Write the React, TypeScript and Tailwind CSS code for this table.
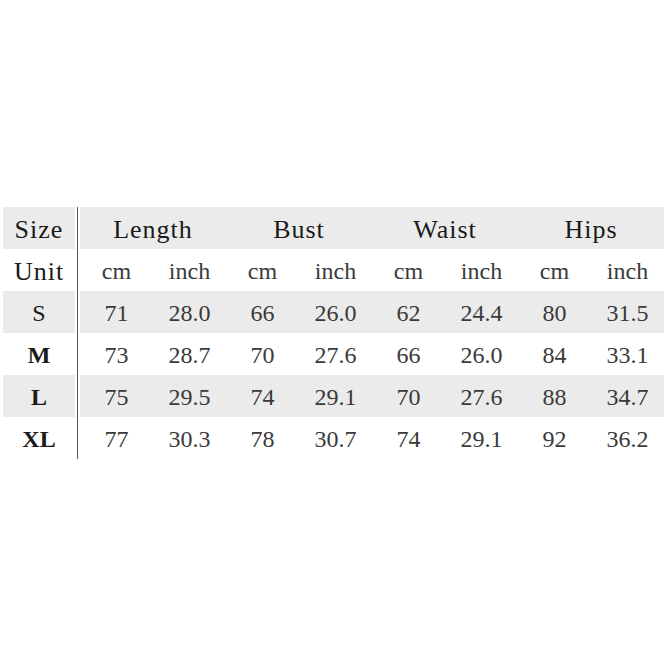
const groups = ["Length", "Bust", "Waist", "Hips"];

const rows: { size: string; bold: boolean; values: string[] }[] = [
  { size: "S", bold: false, values: ["71", "28.0", "66", "26.0", "62", "24.4", "80", "31.5"] },
  { size: "M", bold: true, values: ["73", "28.7", "70", "27.6", "66", "26.0", "84", "33.1"] },
  { size: "L", bold: true, values: ["75", "29.5", "74", "29.1", "70", "27.6", "88", "34.7"] },
  { size: "XL", bold: true, values: ["77", "30.3", "78", "30.7", "74", "29.1", "92", "36.2"] },
];

// row backgrounds alternate: header gray, unit white, S gray, ...
const bgFor = (i: number) => (i % 2 === 0 ? "bg-[#ebebeb]" : "bg-white");

export default function App() {
  return (
    <div
      className="h-[670px] w-[670px] overflow-hidden bg-white pl-[3px] pt-[207px]"
      style={{ fontFamily: '"Liberation Serif", "Times New Roman", serif' }}
    >
      <div className="flex">
        {/* size labels */}
        <div className="flex w-[72px] flex-col">
          <div className={`flex h-[42px] items-center justify-center pt-[2px] text-[26px] tracking-[1px] text-[#1a1a1a] ${bgFor(0)}`}>
            Size
          </div>
          <div className={`flex h-[42px] items-center justify-center pt-[2px] text-[26px] tracking-[1px] text-[#1a1a1a] ${bgFor(1)}`}>
            Unit
          </div>
          {rows.map((r, i) => (
            <div
              key={r.size}
              className={`flex h-[42px] items-center justify-center pt-[2px] text-[24px] text-[#1a1a1a] ${bgFor(i + 2)} ${
                r.bold ? "font-bold" : ""
              }`}
            >
              {r.size}
            </div>
          ))}
        </div>

        {/* divider */}
        <div className="flex w-[5px] justify-center bg-white">
          <div className="h-[252px] w-[1.5px] bg-[#5a5a5a]" />
        </div>

        {/* measurements */}
        <div className="flex w-[584px] flex-col">
          <div className={`grid h-[42px] grid-cols-4 ${bgFor(0)}`}>
            {groups.map((g) => (
              <div key={g} className="flex items-center justify-center pt-[2px] text-[26px] tracking-[1px] text-[#1a1a1a]">
                {g}
              </div>
            ))}
          </div>
          <div className={`grid h-[42px] grid-cols-8 ${bgFor(1)}`}>
            {groups.map((g) => [
              <div key={g + "cm"} className="flex items-center justify-center pt-[2px] text-[24px] text-[#3a3a3a]">
                cm
              </div>,
              <div key={g + "in"} className="flex items-center justify-center pt-[2px] text-[24px] text-[#3a3a3a]">
                inch
              </div>,
            ])}
          </div>
          {rows.map((r, i) => (
            <div key={r.size} className={`grid h-[42px] grid-cols-8 ${bgFor(i + 2)}`}>
              {r.values.map((v, j) => (
                <div key={j} className="flex items-center justify-center pt-[2px] text-[24px] text-[#3a3a3a]">
                  {v}
                </div>
              ))}
            </div>
          ))}
        </div>
      </div>
    </div>
  );
}
